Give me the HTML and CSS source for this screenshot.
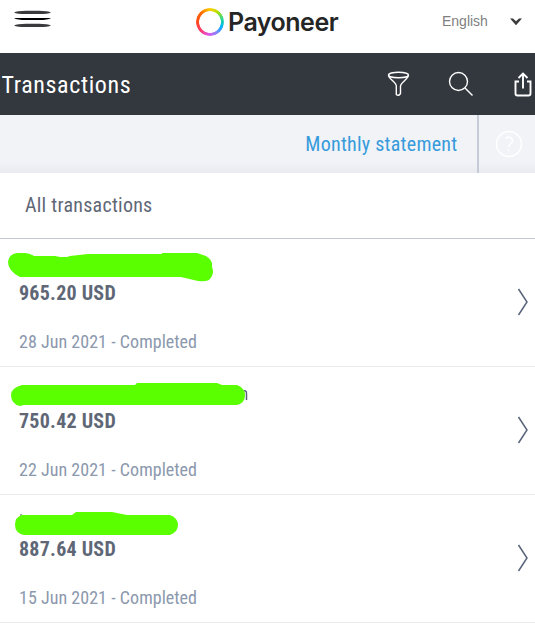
FILE: index.html
```html
<!DOCTYPE html>
<html lang="en">
<head>
<meta charset="utf-8">
<title>Transactions</title>
<link rel="stylesheet" href="styles.css">
</head>
<body>
<header class="top">
  <svg class="menu" width="38" height="18" viewBox="0 0 38 18" fill="#3a3a3c"><path d="M0 2.500Q3 .800 12 .800H25Q34 .800 37 2.500Q34 4 25 4H12Q3 4 0 2.500Z"/><path d="M0 8H37Q34 10 25 10H12Q3 10 0 8Z" fill="#000"/><path d="M0 15.500Q3 13.800 12 13.800H25Q34 13.800 37 15.500Q34 17 25 17H12Q3 17 0 15.500Z"/></svg>
  <div class="brand"><i class="ring"></i><span class="brand-name">Payoneer</span></div>
  <div class="lang"><span>English</span>
    <svg width="12" height="8" viewBox="0 0 12 8" fill="#3c3c3c"><path d="M0 .5H3L6 3.2 9 .5H12L6 7.2Z"/></svg></div>
</header>
<section class="titlebar">
  <h1>Transactions</h1>
  <svg class="filter" width="24" height="26" viewBox="0 0 24 26" fill="none" stroke="#fff" stroke-width="1.4"><ellipse cx="11.5" cy="4" rx="10" ry="2.8"/><path d="M1.500 4C1.500 8 9 11 9.300 15V23.500Q11.500 25.500 13.500 22.500V15C14 11 21.500 8 21.500 4"/></svg>
  <svg class="search" width="26" height="26" viewBox="0 0 26 26" fill="none" stroke="#fff" stroke-width="1.4"><circle cx="10.500" cy="10.500" r="9"/><path d="M17 17L24.500 24.500"/></svg>
  <svg class="share" width="18" height="26" viewBox="0 0 18 26" fill="none" stroke="#fff" stroke-width="1.9"><path d="M5 10.500H1.500V22.500Q1.500 24.500 3.500 24.500H14.500Q16.500 24.500 16.500 22.500V10.500H13M9 17.500V3M4.500 7L9 2.500 13.500 7"/></svg>
</section>
<section class="statement">
  <a class="link"><span>Monthly statement</span></a>
  <div class="help"><svg width="28" height="28" viewBox="0 0 28 28" fill="none" stroke="#fff" stroke-width="1.5"><circle cx="14" cy="14" r="12.500"/><path d="M10.500 8.500C13 6.500 17.500 7 17.500 10.500 17.500 13.500 13.800 13.500 13.800 17.300"/><path d="M13.800 19.500V21.300"/></svg></div>
</section>
<h2 class="all"><span>All transactions</span></h2>
<main>
  <article class="row">
    <div class="name"><svg width="220" height="32" viewBox="0 0 220 32" fill="#5aff00"><path d="M17 1H25Q29 1 34 4H55L60 5H67L70 4 88 2H162V1H197L206 4Q213 8 212 15 215 22 209 28 205 30 198 29L181 25H20Q8 19 8 10 9 2 17 1Z"/></svg></div>
    <div class="amount"><span>965.20 USD</span></div><div class="date"><span>28 Jun 2021 - Completed</span></div>
    <svg class="chev" width="12" height="28" viewBox="0 0 12 28"><path d="M1.500 1L10 14 1.500 27"/></svg>
  </article>
  <article class="row">
    <div class="name"><svg width="252" height="32" viewBox="0 -2 252 32" fill="#5aff00"><path d="M244 9Q246.500 8 246.500 12V18" fill="none" stroke="#59647a" stroke-width="1.500"/><path d="M22 3H135L137 1H217L222 3H237Q245 6 245 13 245 21 237 23H24L20 24Q11 22 11 13 11 6 22 3Z"/></svg></div>
    <div class="amount"><span>750.42 USD</span></div><div class="date"><span>22 Jun 2021 - Completed</span></div>
    <svg class="chev" width="12" height="28" viewBox="0 0 12 28"><path d="M1.500 1L10 14 1.500 27"/></svg>
  </article>
  <article class="row">
    <div class="name"><svg width="220" height="32" viewBox="0 -2 220 32" fill="#5aff00"><path d="M20 5H22" stroke="#444b55"/><path d="M22 5H72L76 2H112L117 3 127 5H170Q178 8 178 15 178 22 170 25H24Q15 23 15 15 15 7 22 5Z"/></svg></div>
    <div class="amount"><span>887.64 USD</span></div><div class="date"><span>15 Jun 2021 - Completed</span></div>
    <svg class="chev" width="12" height="28" viewBox="0 0 12 28"><path d="M1.500 1L10 14 1.500 27"/></svg>
  </article>
</main>
</body>
</html>
```
FILE: styles.css
```css
* { box-sizing: border-box; margin: 0; padding: 0; }
body { width: 535px; height: 624px; overflow: hidden; background: #fff; font-family: "Roboto Condensed", Roboto, "Liberation Sans", sans-serif; font-stretch: 75%; }
svg { display: block; flex: none; }
.top { height: 53px; display: flex; align-items: flex-start; }
.menu { margin: 10px 0 0 14px; }
.brand { display: flex; margin: 7.500px 0 0 144.400px; width: 245.600px; }
.ring { flex: none; width: 28px; height: 28px; border-radius: 50%; background: conic-gradient(#ffcf00, #b6e000 35deg, #20d5a0 80deg, #00b0ff 115deg, #8088ff 145deg, #dc58e8 185deg, #ff3c78 225deg, #ff4818 270deg, #ff6a00 315deg, #ffcf00); -webkit-mask: radial-gradient(circle, transparent 10.500px, #000 11.200px); mask: radial-gradient(circle, transparent 10.500px, #000 11.200px); }
.brand-name { margin-left: 3.600px; font: 600 25px/29px Inter, sans-serif; letter-spacing: -.5px; color: #252525; }
.lang { display: flex; font: 14px/16px "Liberation Sans", sans-serif; color: #7f7f7f; margin-top: 13px; }
.lang span { width: 68px; }
.lang svg { margin-top: 5px; }
.titlebar { height: 62px; background: #33373e; display: flex; align-items: center; color: #fff; }
h1 { font-size: 24px; font-weight: 450; letter-spacing: .62px; width: 386px; padding: 2px 0 0 1.500px; }
.filter { margin-left: 1px; }
.search { margin-left: 37px; }
.share { margin-left: 40px; }
.statement { height: 58px; display: flex; background: linear-gradient(#f1f3f7 80%, #e9ebf0); }
.link { width: 479px; border-right: 2px solid #c5cbd7; padding: 17px 0 0 305.300px; font-size: 20px; line-height: 24px; letter-spacing: .25px; color: #379bdc; white-space: nowrap; }
.help { padding: 15px 0 0 16px; }
.all { height: 66px; border-bottom: 1px solid #c5c9d6; padding: 20px 0 0 25px; font-size: 20px; line-height: 24px; font-weight: 400; letter-spacing: .25px; color: #5f6776; }
.row { height: 128px; border-bottom: 1px solid #ececec; display: grid; grid-template-columns: 517px 12px; grid-template-rows: 42px 50px 35px; }
.name { padding-top: 13px; height: 42px; }
.amount { grid-column: 1; padding-left: 19px; font-size: 20px; font-weight: 700; line-height: 24px; letter-spacing: .25px; color: #5f6776; }
.date { grid-column: 1; padding-left: 19px; font-size: 18px; line-height: 22px; letter-spacing: .03px; color: #8b98ad; }
.chev { grid-column: 2; grid-row: 1 / 4; margin-top: 49px; fill: none; stroke: #59647a; stroke-width: 1.500; }
```
